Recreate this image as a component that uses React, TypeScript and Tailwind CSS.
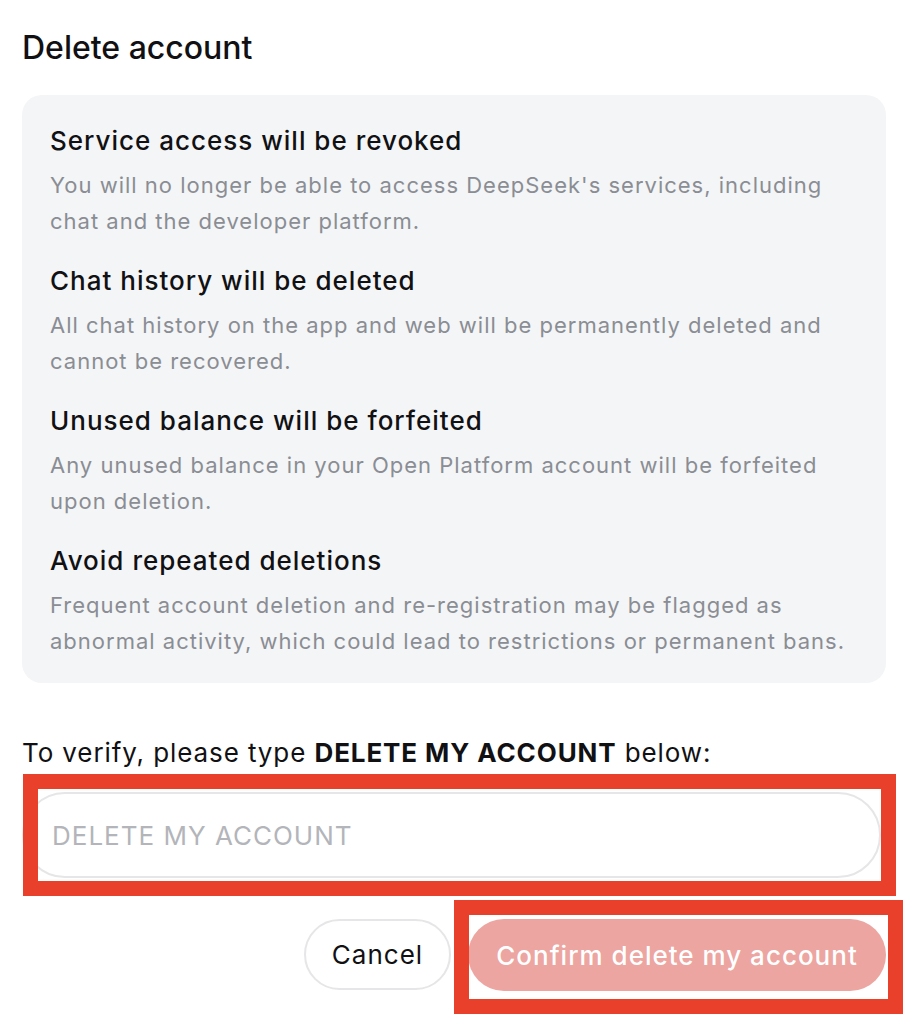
import { useState } from 'react';

const notices = [
  {
    title: 'Service access will be revoked',
    body: "You will no longer be able to access DeepSeek's services, including chat and the developer platform.",
  },
  {
    title: 'Chat history will be deleted',
    body: 'All chat history on the app and web will be permanently deleted and cannot be recovered.',
  },
  {
    title: 'Unused balance will be forfeited',
    body: 'Any unused balance in your Open Platform account will be forfeited upon deletion.',
  },
  {
    title: 'Avoid repeated deletions',
    body: 'Frequent account deletion and re-registration may be flagged as abnormal activity, which could lead to restrictions or permanent bans.',
  },
];

const CONFIRM_PHRASE = 'DELETE MY ACCOUNT';

export default function App() {
  const [value, setValue] = useState('');
  const canConfirm = value === CONFIRM_PHRASE;

  return (
    <div className="relative min-h-[1016px] w-[916px] bg-white pl-[22px] pr-[30px] pt-7 font-['Inter',sans-serif] text-[#111114]">
      <h1 className="text-[32px] font-medium leading-10">Delete account</h1>

      {/* Consequences card */}
      <div className="mt-[27px] flex flex-col gap-6 rounded-[20px] bg-[#f4f5f7] px-7 pb-6 pt-7">
        {notices.map((n) => (
          <div key={n.title}>
            <h2 className="text-[26px] font-medium leading-9 tracking-[1px]">{n.title}</h2>
            <p className="mt-2 text-[22px] leading-9 tracking-[1px] text-[#8a8d93]">{n.body}</p>
          </div>
        ))}
      </div>

      <p className="mt-[52px] text-[26px] leading-9 tracking-[0.9px]">
        To verify, please type <strong className="font-bold">{CONFIRM_PHRASE}</strong> below:
      </p>

      <input
        value={value}
        onChange={(e) => setValue(e.target.value)}
        placeholder={CONFIRM_PHRASE}
        className="mt-[21px] h-[86px] w-[859px] rounded-full border-2 border-[#e6e6e8] bg-white px-7 text-[26px] tracking-[1px] outline-none placeholder:text-[#b3b5ba]"
      />

      <div className="mt-[41px] flex justify-end gap-[17px]">
        <button className="h-[71px] w-[147px] rounded-full border-2 border-[#e6e6e8] bg-white text-[26px] tracking-[1px]">
          Cancel
        </button>
        <button
          disabled={!canConfirm}
          className="h-[72px] w-[418px] rounded-full bg-[#eca5a0] text-[26px] font-medium tracking-[1px] text-white"
        >
          Confirm delete my account
        </button>
      </div>

      {/* highlight boxes */}
      <div className="pointer-events-none absolute left-[23px] top-[774px] h-[122px] w-[873px] border-[15px] border-[#e8402a]" />
      <div className="pointer-events-none absolute left-[454px] top-[900px] h-[114px] w-[449px] border-[15px] border-[#e8402a]" />
    </div>
  );
}
